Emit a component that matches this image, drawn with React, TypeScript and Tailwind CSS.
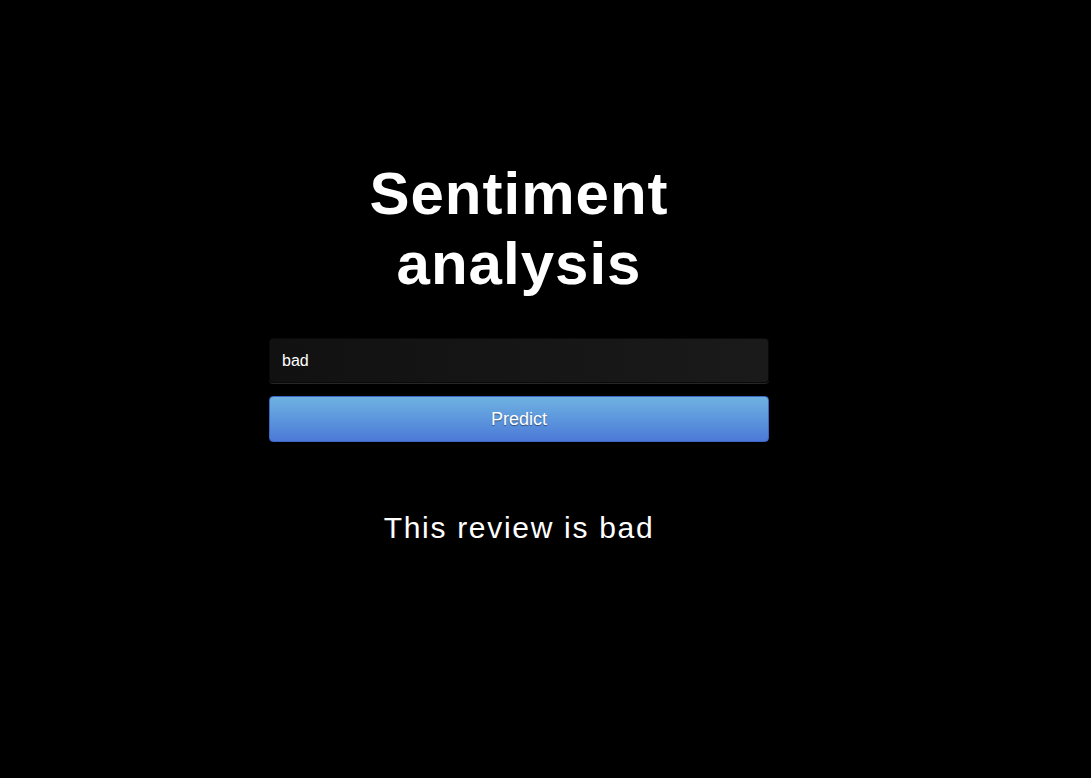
import { useEffect, useRef } from 'react';

export default function App() {
  const inputRef = useRef<HTMLInputElement>(null);

  useEffect(() => {
    const el = inputRef.current;
    if (el) {
      el.focus();
      el.setSelectionRange(3, 3);
    }
  }, []);

  return (
    <div className="min-h-[778px] w-full bg-black font-['Liberation_Sans',Arial,sans-serif] text-white">
      <div className="ml-[269px] w-[500px] pt-[159px]">
        <h1 className="text-center text-[60px] font-bold leading-[70px] tracking-[1px]">
          Sentiment
          <br />
          analysis
        </h1>

        {/* Form */}
        <div className="mt-[39px] flex flex-col gap-[13px]">
          <input
            ref={inputRef}
            defaultValue="bad"
            className="h-[45px] w-full rounded-[4px] border border-[#0a0a0a] bg-gradient-to-r from-[#111111] to-[#1a1a1a] px-[12px] text-[16px] text-white caret-white shadow-[0_1px_0_#262626] outline-none"
          />
          <button className="h-[46px] w-full rounded-[4px] border border-[#3f66c4] bg-gradient-to-b from-[#6fb2e1] to-[#4c79d7] text-[18px] text-white [text-shadow:0_1px_1px_rgba(0,0,0,0.45)]">
            Predict
          </button>
        </div>

        <p className="mt-[69px] text-center text-[30px] leading-[34px] tracking-[1.7px]">
          This review is bad
        </p>
      </div>
    </div>
  );
}
